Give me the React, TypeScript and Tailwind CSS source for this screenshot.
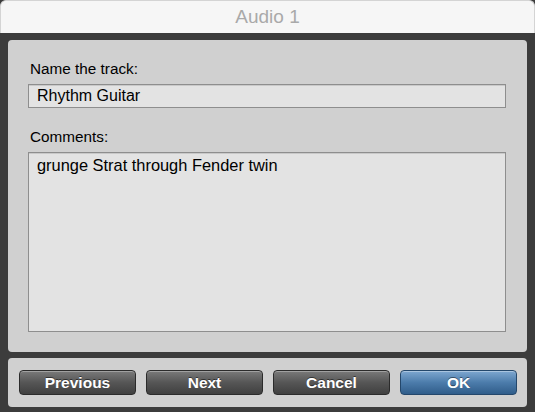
import React from "react";

const font = { fontFamily: '"Liberation Sans", Arial, Helvetica, sans-serif' };

function Btn({ label, primary }: { label: string; primary?: boolean }) {
  return (
    <button
      className={
        primary
          ? "w-[117px] h-[25px] rounded-[4px] border border-[#24476b] bg-gradient-to-b from-[#7ea7d0] via-[#4c7cab] to-[#305d8a] text-white font-bold text-[15.5px] shadow-[inset_0_1px_0_rgba(255,255,255,0.35)] [text-shadow:0_-1px_0_rgba(0,0,0,0.45)]"
          : "w-[117px] h-[25px] rounded-[4px] border border-[#2b2b2b] bg-gradient-to-b from-[#7a7a7a] via-[#565656] to-[#404040] text-white font-bold text-[15.5px] shadow-[inset_0_1px_0_rgba(255,255,255,0.3)] [text-shadow:0_-1px_0_rgba(0,0,0,0.5)]"
      }
      style={font}
    >
      {label}
    </button>
  );
}

export default function App() {
  return (
    <div className="w-[535px] h-[412px] bg-[#3c3c3c] overflow-hidden" style={font}>
      <div className="w-full h-full flex flex-col">
        <div className="h-[33px] shrink-0 bg-[#f6f6f6] rounded-t-[6px] border-x border-t border-[#d4d4d4] flex items-center justify-center text-[19px] text-[#a9a9a9]">
          Audio 1
        </div>
        <div className="flex-1 bg-[#3c3c3c] flex flex-col pl-[8px] pr-[8px] pt-[7px] pb-[5px] gap-[6px]">
          <div className="h-[312px] rounded-[4px] bg-[#d0d0d0] flex flex-col pl-[20px] pr-[21px] pt-[20px] pb-[20px]">
            <div className="ml-[2px] text-[15.3px] leading-[18px] text-black">Name the track:</div>
            <div className="mt-[6px] h-[24px] border border-[#8e8e8e] bg-[#e3e3e3] flex items-center px-[8px] text-[16px] text-black shadow-[inset_0_1px_0_#c9c9c9]">
              Rhythm Guitar
            </div>
            <div className="mt-[20px] ml-[2px] text-[15.3px] leading-[18px] text-black">Comments:</div>
            <div className="mt-[6px] flex-1 border border-[#8e8e8e] bg-[#e3e3e3] px-[8px] pt-[3px] text-[16.4px] leading-[19px] text-black shadow-[inset_0_1px_0_#c9c9c9]">
              grunge Strat through Fender twin
            </div>
          </div>
          <div className="h-[49px] rounded-[4px] bg-[#d0d0d0] flex items-center justify-between pl-[11px] pr-[10px]">
            <Btn label="Previous" />
            <Btn label="Next" />
            <Btn label="Cancel" />
            <Btn label="OK" primary />
          </div>
        </div>
      </div>
    </div>
  );
}
